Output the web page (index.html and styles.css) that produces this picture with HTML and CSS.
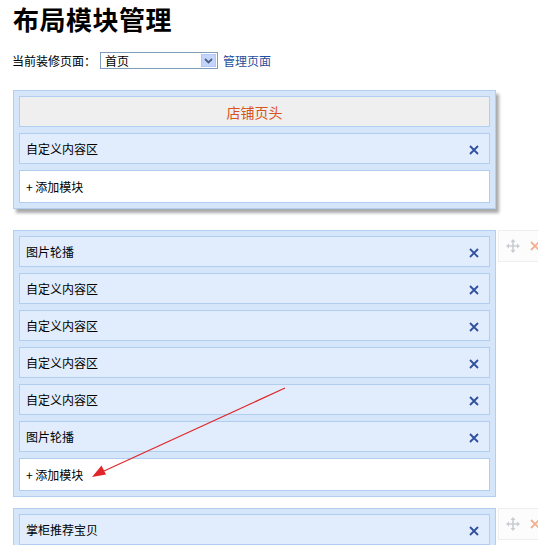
FILE: index.html
```html
<!DOCTYPE html>
<html lang="zh-CN">
<head>
<meta charset="utf-8">
<title>布局模块管理</title>
<link rel="stylesheet" href="styles.css">
</head>
<body>
<div class="page">
  <h1 class="title">布局模块管理</h1>
  <div class="pick">
    <span class="pick-label">当前装修页面：</span>
    <span class="select">
      <span class="select-text">首页</span>
      <span class="select-btn"><svg width="9" height="6" viewBox="0 0 9 6"><path d="M1 1 L4.5 4.5 L8 1" fill="none" stroke="#4d6185" stroke-width="1.8"/></svg></span>
    </span>
    <a class="pick-link" href="#">管理页面</a>
  </div>

  <div class="box box-shadow">
    <div class="row row-head">店铺页头</div>
    <div class="row"><span>自定义内容区</span><span class="del"><svg width="10" height="10" viewBox="0 0 10 10"><path d="M1 1 L9 9 M9 1 L1 9" stroke="#2f4f9f" stroke-width="1.8"/></svg></span></div>
    <div class="row row-add">+ 添加模块</div>
  </div>

  <div class="box box-mid">
    <div class="row"><span>图片轮播</span><span class="del"><svg width="10" height="10" viewBox="0 0 10 10"><path d="M1 1 L9 9 M9 1 L1 9" stroke="#2f4f9f" stroke-width="1.8"/></svg></span></div>
    <div class="row"><span>自定义内容区</span><span class="del"><svg width="10" height="10" viewBox="0 0 10 10"><path d="M1 1 L9 9 M9 1 L1 9" stroke="#2f4f9f" stroke-width="1.8"/></svg></span></div>
    <div class="row"><span>自定义内容区</span><span class="del"><svg width="10" height="10" viewBox="0 0 10 10"><path d="M1 1 L9 9 M9 1 L1 9" stroke="#2f4f9f" stroke-width="1.8"/></svg></span></div>
    <div class="row"><span>自定义内容区</span><span class="del"><svg width="10" height="10" viewBox="0 0 10 10"><path d="M1 1 L9 9 M9 1 L1 9" stroke="#2f4f9f" stroke-width="1.8"/></svg></span></div>
    <div class="row"><span>自定义内容区</span><span class="del"><svg width="10" height="10" viewBox="0 0 10 10"><path d="M1 1 L9 9 M9 1 L1 9" stroke="#2f4f9f" stroke-width="1.8"/></svg></span></div>
    <div class="row"><span>图片轮播</span><span class="del"><svg width="10" height="10" viewBox="0 0 10 10"><path d="M1 1 L9 9 M9 1 L1 9" stroke="#2f4f9f" stroke-width="1.8"/></svg></span></div>
    <div class="row row-add">+ 添加模块</div>
    <div class="tools">
      <svg class="move" width="14" height="14" viewBox="0 0 14 14"><path d="M7 1 L7 13 M1 7 L13 7" stroke="#c9cdd3" stroke-width="1.6"/><path d="M7 0 L4.5 3 L9.5 3 Z M7 14 L4.5 11 L9.5 11 Z M0 7 L3 4.5 L3 9.5 Z M14 7 L11 4.5 L11 9.5 Z" fill="#c9cdd3"/></svg>
      <svg class="close" width="10" height="10" viewBox="0 0 10 10"><path d="M1 1 L9 9 M9 1 L1 9" stroke="#f3b08f" stroke-width="1.8"/></svg>
    </div>
  </div>

  <div class="box box-last">
    <div class="row"><span>掌柜推荐宝贝</span><span class="del"><svg width="10" height="10" viewBox="0 0 10 10"><path d="M1 1 L9 9 M9 1 L1 9" stroke="#2f4f9f" stroke-width="1.8"/></svg></span></div>
    <div class="row"></div>
    <div class="tools">
      <svg class="move" width="14" height="14" viewBox="0 0 14 14"><path d="M7 1 L7 13 M1 7 L13 7" stroke="#c9cdd3" stroke-width="1.6"/><path d="M7 0 L4.5 3 L9.5 3 Z M7 14 L4.5 11 L9.5 11 Z M0 7 L3 4.5 L3 9.5 Z M14 7 L11 4.5 L11 9.5 Z" fill="#c9cdd3"/></svg>
      <svg class="close" width="10" height="10" viewBox="0 0 10 10"><path d="M1 1 L9 9 M9 1 L1 9" stroke="#f3b08f" stroke-width="1.8"/></svg>
    </div>
  </div>

  <svg class="arrow" width="538" height="545" viewBox="0 0 538 545">
    <line x1="285" y1="388" x2="104" y2="471" stroke="#e0262a" stroke-width="1.2"/>
    <path d="M92 477 L101.5 465.5 L106 474.5 Z" fill="#e0262a"/>
  </svg>
</div>
</body>
</html>
```
FILE: styles.css
```css
html, body {
  margin: 0;
  padding: 0;
  overflow: hidden;
  background: #ffffff;
}
body {
  font-family: "Noto Sans CJK SC", "Noto Sans", sans-serif;
  font-size: 12px;
  color: #000;
}
.page {
  position: relative;
  width: 538px;
  height: 545px;
  padding: 0 0 0 12px;
  box-sizing: border-box;
}
.title {
  margin: 0;
  font-size: 26px;
  line-height: 38px;
  font-weight: bold;
  letter-spacing: 0.5px;
  padding-left: 1px;
}
.pick {
  display: flex;
  align-items: center;
  margin-top: 14px;
  height: 17px;
}
.pick-label {
  line-height: 17px;
  margin-right: 4px;
}
.select {
  display: flex;
  align-items: stretch;
  width: 118px;
  height: 17px;
  box-sizing: border-box;
  border: 1px solid #7f9db9;
  background: #fff;
}
.select-text {
  flex: 1;
  padding-left: 4px;
  line-height: 15px;
}
.select-btn {
  width: 15px;
  margin: 1px;
  background: #c4d5fb;
  border: 1px solid #b4c7f3;
  box-sizing: border-box;
  display: flex;
  align-items: center;
  justify-content: center;
}
.pick-link {
  margin-left: 5px;
  color: #1f4f9d;
  text-decoration: none;
  line-height: 17px;
}
.box {
  position: relative;
  width: 483px;
  margin-left: 1px;
  box-sizing: border-box;
  border: 1px solid #b3cff0;
  background: #d5e5fa;
  padding: 5px;
  display: flex;
  flex-direction: column;
  gap: 6px;
}
.box-shadow {
  margin-top: 21px;
  box-shadow: 3px 4px 3px #a9a9a9;
}
.box-mid {
  margin-top: 21px;
}
.box-last {
  margin-top: 11px;
}
.row {
  height: 31px;
  box-sizing: border-box;
  border: 1px solid #b1cdef;
  background: #e1edfc;
  display: flex;
  align-items: center;
  justify-content: space-between;
  padding: 0 10px 0 6px;
  flex-shrink: 0;
}
.row-head {
  justify-content: center;
  background: #efefef;
  color: #d9541d;
  font-size: 14px;
  padding: 0;
}
.row-add {
  height: 33px;
  background: #ffffff;
}
.del {
  display: flex;
  align-items: center;
  margin-top: 2px;
}
.tools {
  position: absolute;
  left: 484px;
  top: -1px;
  width: 60px;
  height: 32px;
  box-sizing: border-box;
  border: 1px solid #eeeeee;
  background: #fcfcfc;
  display: flex;
  align-items: center;
  padding-left: 7px;
  gap: 10px;
}
.arrow {
  position: absolute;
  left: 0;
  top: 0;
  pointer-events: none;
}
```
